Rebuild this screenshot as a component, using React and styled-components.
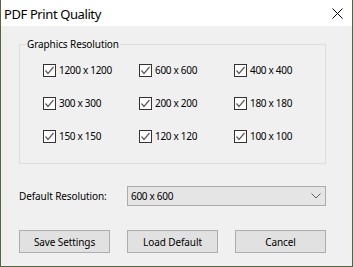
import React from "react";
import styled, { createGlobalStyle } from "styled-components";

const Global = createGlobalStyle`
  html, body { margin: 0; padding: 0; background: #56643f; }
  * { box-sizing: border-box; }
`;

const Window = styled.div`
  width: 353px;
  height: 267px;
  border: 1px solid #55633f;
  border-top: none;
  background: #f0f0f0;
  display: flex;
  flex-direction: column;
  font-family: "Noto Sans", "Liberation Sans", sans-serif;
  font-size: 10px;
  letter-spacing: -0.1px;
  color: #000;
`;

const TitleBar = styled.div`
  height: 26px;
  background: #fff;
  display: flex;
  align-items: center;
  justify-content: space-between;
  padding: 1px 9px 0 3px;
  font-size: 13px;
  letter-spacing: -0.4px;
  flex-shrink: 0;
`;

const Body = styled.div`
  flex: 1;
  padding: 0 26px 0 18px;
  display: flex;
  flex-direction: column;
`;

const Group = styled.fieldset`
  margin: 11px 0 0 0;
  padding: 0;
  height: 127px;
  border: 1px solid #dcdcdc;
  min-width: 0;
`;

const Legend = styled.legend`
  padding: 0 1px;
  margin-left: 6px;
  line-height: 14px;
`;

const Grid = styled.div`
  display: grid;
  grid-template-columns: 96px 95px auto;
  grid-auto-rows: 33px;
  padding: 13px 0 0 23px;
`;

const CheckItem = styled.label`
  display: flex;
  align-items: flex-start;
  gap: 3px;
  line-height: 13px;
  white-space: nowrap;
  letter-spacing: -0.3px;
`;

const Box = styled.span`
  width: 13px;
  height: 13px;
  border: 1px solid #333;
  background: #fff;
  display: flex;
  align-items: center;
  justify-content: center;
  flex-shrink: 0;
`;

const Row = styled.div`
  display: flex;
  align-items: center;
  margin-top: 22px;
  height: 20px;
`;

const Label = styled.span`
  width: 108px;
  flex-shrink: 0;
`;

const Combo = styled.div`
  flex: 1;
  height: 20px;
  background: #e5e5e5;
  border: 1px solid #acacac;
  display: flex;
  align-items: center;
  justify-content: space-between;
  padding: 0 4px 0 3px;
  letter-spacing: -0.3px;
`;

const Buttons = styled.div`
  display: flex;
  justify-content: space-between;
  margin-top: 24px;
`;

const Button = styled.button`
  width: 91px;
  height: 23px;
  background: #e1e1e1;
  border: 1px solid #adadad;
  font-family: inherit;
  font-size: 10px;
  letter-spacing: inherit;
  color: #000;
  padding: 0;
`;

const CheckMark = () => (
  <svg width="11" height="11" viewBox="0 0 11 11">
    <path d="M1.5 5.5 L4 8.5 L9.5 2" fill="none" stroke="#5a5a5a" strokeWidth="1.2" />
  </svg>
);

const Check = ({ children }) => (
  <CheckItem>
    <Box><CheckMark /></Box>
    <span>{children}</span>
  </CheckItem>
);

const values = [
  "1200 x 1200", "600 x 600", "400 x 400",
  "300 x 300", "200 x 200", "180 x 180",
  "150 x 150", "120 x 120", "100 x 100",
];

export default function App() {
  return (
    <>
      <Global />
      <Window>
        <TitleBar>
          <span>PDF Print Quality</span>
          <svg width="11" height="11" viewBox="0 0 11 11">
            <path d="M0.5 0.5 L10.5 10.5 M10.5 0.5 L0.5 10.5" stroke="#000" strokeWidth="1" />
          </svg>
        </TitleBar>
        <Body>
          <Group>
            <Legend>Graphics Resolution</Legend>
            <Grid>
              {values.map((v) => (
                <Check key={v}>{v}</Check>
              ))}
            </Grid>
          </Group>
          <Row>
            <Label>Default Resolution:</Label>
            <Combo>
              <span>600 x 600</span>
              <svg width="10" height="6" viewBox="0 0 10 6">
                <path d="M0.5 0.5 L5 5 L9.5 0.5" fill="none" stroke="#606060" strokeWidth="1" />
              </svg>
            </Combo>
          </Row>
          <Buttons>
            <Button>Save Settings</Button>
            <Button>Load Default</Button>
            <Button>Cancel</Button>
          </Buttons>
        </Body>
      </Window>
    </>
  );
}
